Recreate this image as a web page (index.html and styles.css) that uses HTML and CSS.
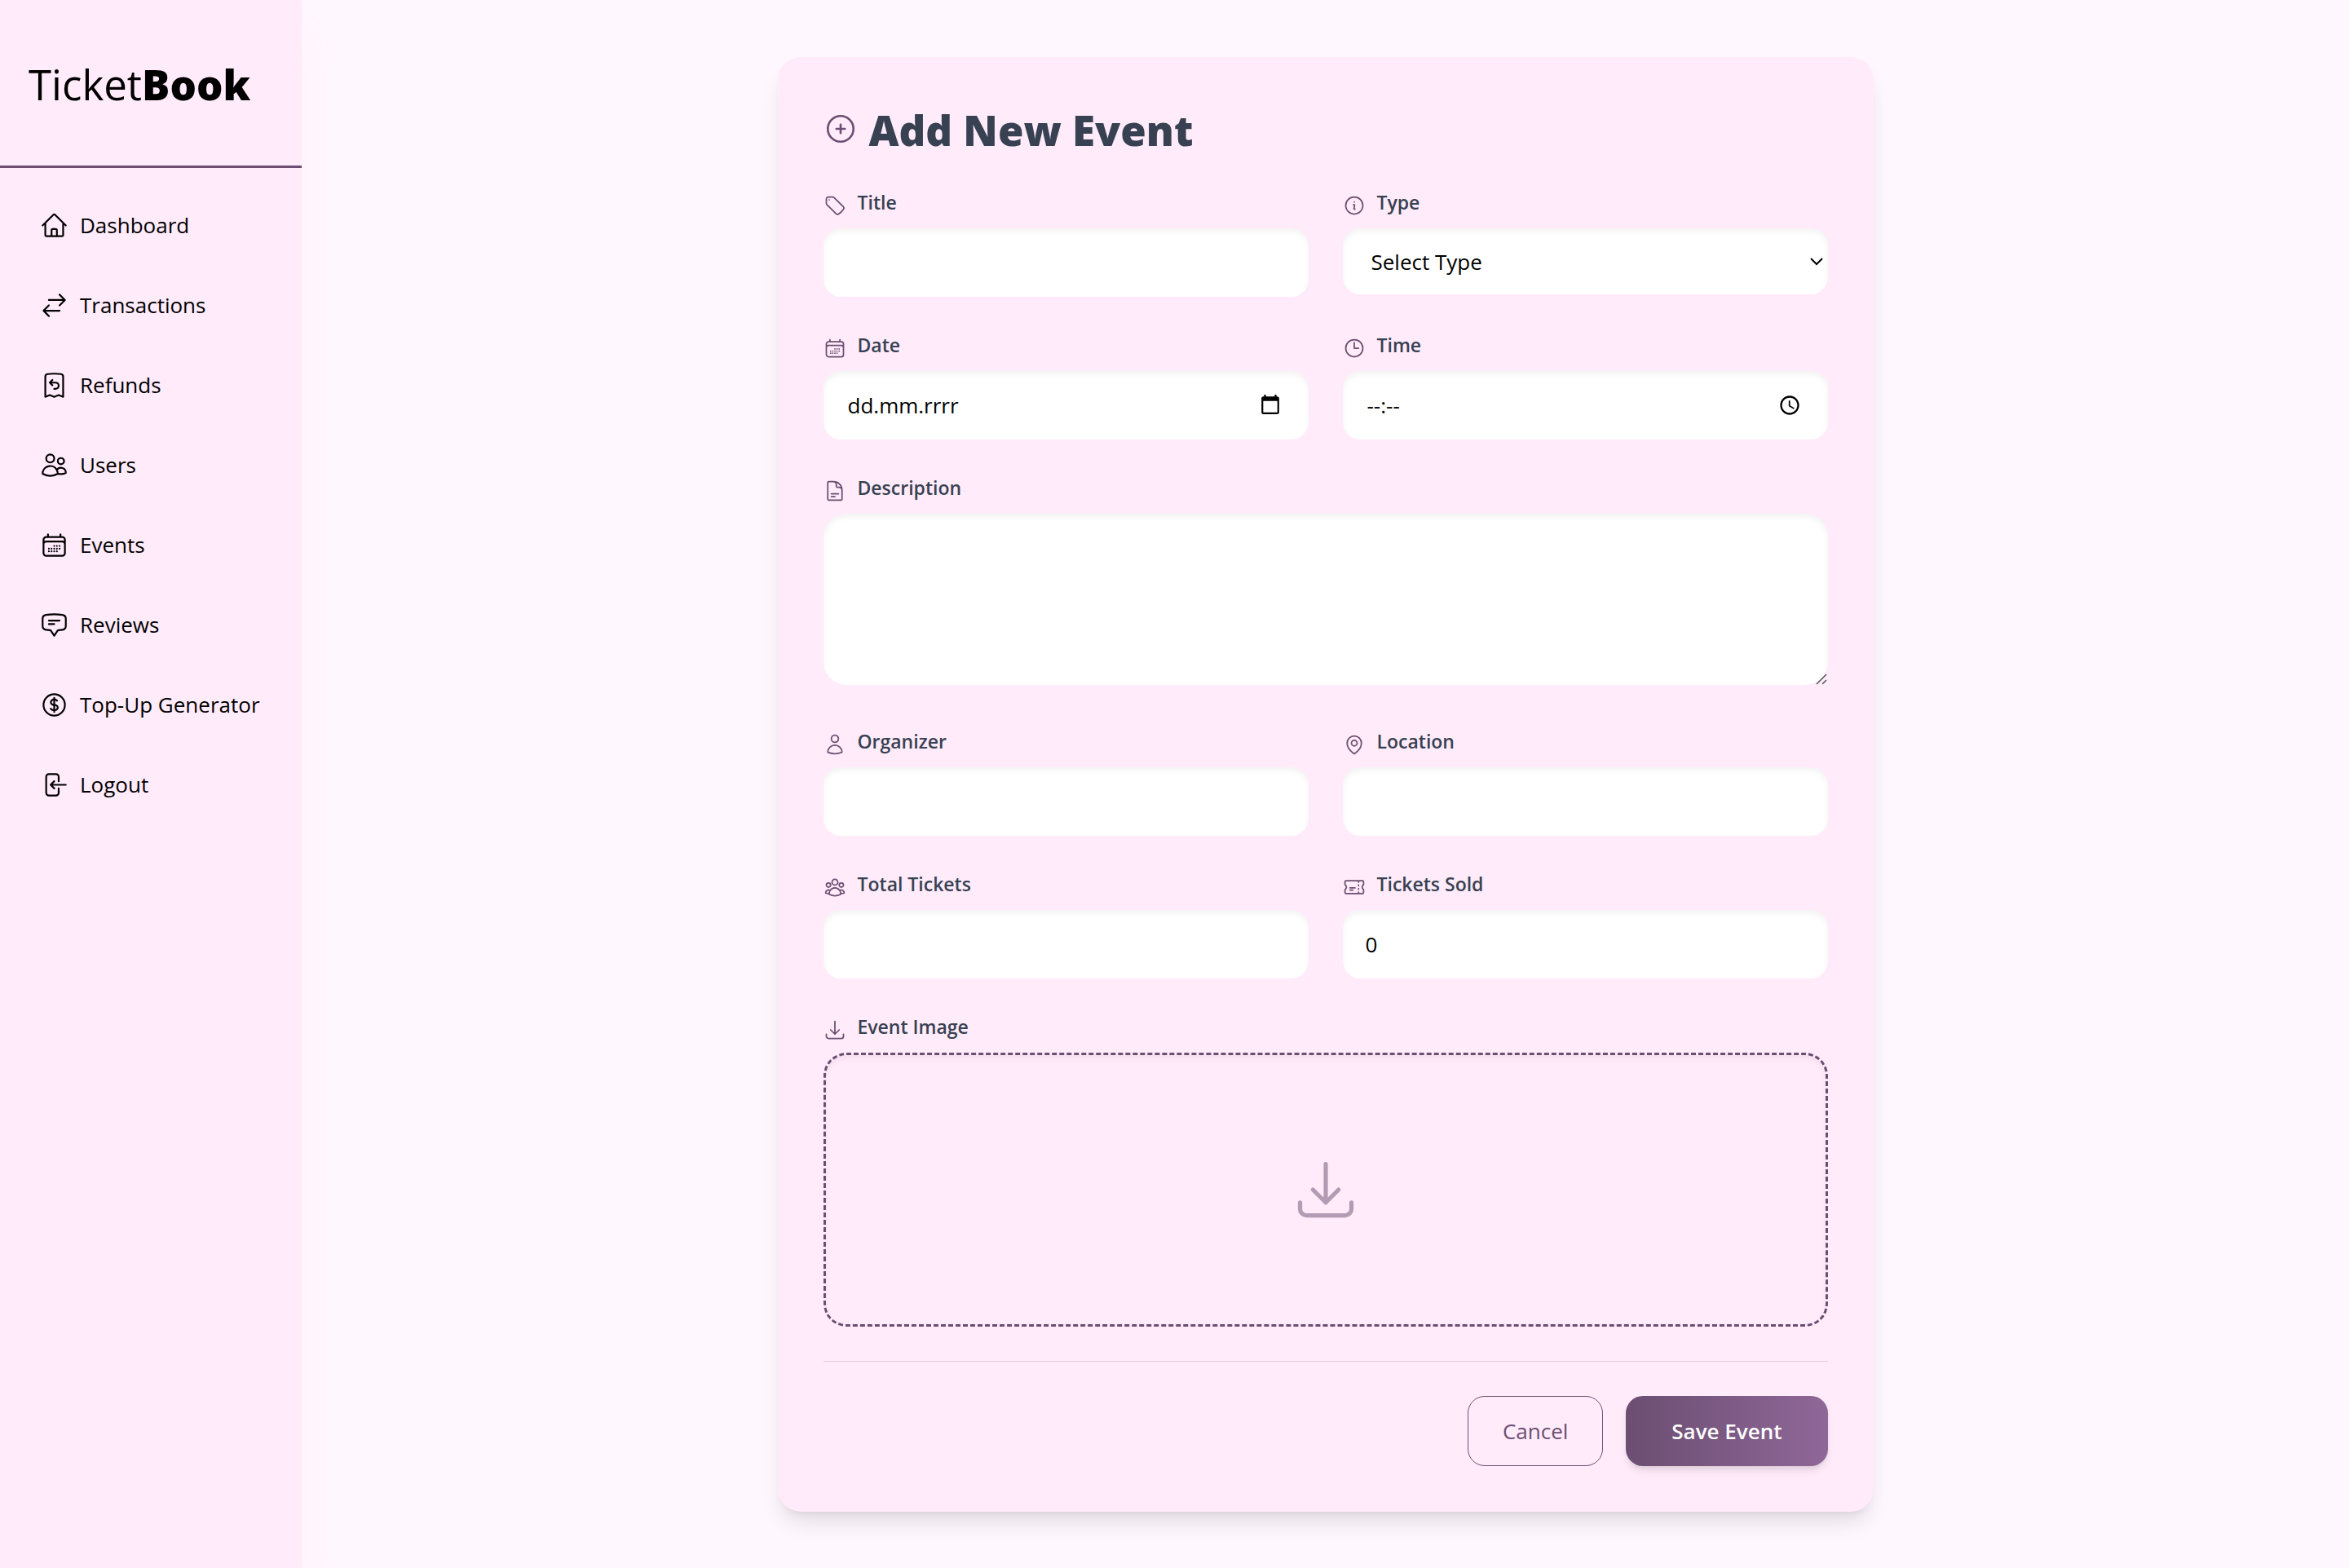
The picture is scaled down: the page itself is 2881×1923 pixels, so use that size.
FILE: index.html
```html
<!DOCTYPE html>
<html lang="en">
<head>
<meta charset="utf-8">
<meta name="viewport" content="width=device-width, initial-scale=1">
<title>TicketBook</title>
<link rel="stylesheet" href="styles.css">
</head>
<body>
<div class="app">
  <aside class="sidebar">
    <div class="logo"><span class="logo-light">Ticket</span><span class="logo-heavy">Book</span></div>
    <nav class="nav">
      <a class="nav-link" href="#dashboard"><svg class="icon icon-nav" viewBox="0 0 24 24"><path d="m2.25 12 8.954-8.955c.44-.439 1.152-.439 1.591 0L21.75 12M4.5 9.75v10.125c0 .621.504 1.125 1.125 1.125H9.75v-4.875c0-.621.504-1.125 1.125-1.125h2.25c.621 0 1.125.504 1.125 1.125V21h4.125c.621 0 1.125-.504 1.125-1.125V9.75M8.25 21h8.25"/></svg>Dashboard</a>
      <a class="nav-link" href="#transactions"><svg class="icon icon-nav" viewBox="0 0 24 24"><path d="M7.5 21 3 16.5m0 0L7.5 12M3 16.5h13.5m0-13.5L21 7.5m0 0L16.5 12M21 7.5H7.5"/></svg>Transactions</a>
      <a class="nav-link" href="#refunds"><svg class="icon icon-nav" viewBox="0 0 24 24"><path d="M8.25 9.75h4.875a2.625 2.625 0 0 1 0 5.25H12M8.25 9.75 10.5 7.5M8.25 9.75 10.5 12m9-7.243V21.75l-3.75-1.5-3.75 1.5-3.75-1.5-3.75 1.5V4.757c0-1.108.806-2.057 1.907-2.185a48.507 48.507 0 0 1 11.186 0c1.1.128 1.907 1.077 1.907 2.185Z"/></svg>Refunds</a>
      <a class="nav-link" href="#users"><svg class="icon icon-nav" viewBox="0 0 24 24"><path d="M15 19.128a9.38 9.38 0 0 0 2.625.372 9.337 9.337 0 0 0 4.121-.952 4.125 4.125 0 0 0-7.533-2.493M15 19.128v-.003c0-1.113-.285-2.16-.786-3.07M15 19.128v.106A12.318 12.318 0 0 1 8.624 21c-2.331 0-4.512-.645-6.374-1.766l-.001-.109a6.375 6.375 0 0 1 11.964-3.07M12 6.375a3.375 3.375 0 1 1-6.75 0 3.375 3.375 0 0 1 6.75 0Zm8.25 2.25a2.625 2.625 0 1 1-5.25 0 2.625 2.625 0 0 1 5.25 0Z"/></svg>Users</a>
      <a class="nav-link" href="#events"><svg class="icon icon-nav" viewBox="0 0 24 24"><path d="M6.75 3v2.25M17.25 3v2.25M3 18.75V7.5a2.25 2.25 0 0 1 2.25-2.25h13.5A2.25 2.25 0 0 1 21 7.5v11.25m-18 0A2.25 2.25 0 0 0 5.25 21h13.5A2.25 2.25 0 0 0 21 18.75m-18 0v-7.5A2.25 2.25 0 0 1 5.25 9h13.5A2.25 2.25 0 0 1 21 11.25v7.5m-9-6h.008v.008H12v-.008ZM12 15h.008v.008H12V15Zm0 2.25h.008v.008H12v-.008ZM9.75 15h.008v.008H9.75V15Zm0 2.25h.008v.008H9.75v-.008ZM7.5 15h.008v.008H7.5V15Zm0 2.25h.008v.008H7.5v-.008Zm6.75-4.5h.008v.008h-.008v-.008Zm0 2.25h.008v.008h-.008V15Zm0 2.25h.008v.008h-.008v-.008Zm2.25-4.5h.008v.008H16.5v-.008Zm0 2.25h.008v.008H16.5V15Z"/></svg>Events</a>
      <a class="nav-link" href="#reviews"><svg class="icon icon-nav" viewBox="0 0 24 24"><path d="M7.5 8.25h9m-9 3H12m-9.75 1.51c0 1.6 1.123 2.994 2.707 3.227 1.129.166 2.27.293 3.423.379.35.026.67.21.865.501L12 21l2.755-4.133a1.14 1.14 0 0 1 .865-.501 48.172 48.172 0 0 0 3.423-.379c1.584-.233 2.707-1.626 2.707-3.228V6.741c0-1.602-1.123-2.995-2.707-3.228A48.394 48.394 0 0 0 12 3c-2.392 0-4.744.175-7.043.513C3.373 3.746 2.25 5.14 2.25 6.741v6.018Z"/></svg>Reviews</a>
      <a class="nav-link" href="#top-up"><svg class="icon icon-nav" viewBox="0 0 24 24"><path d="M12 6v12m-3-2.818.879.659c1.171.879 3.07.879 4.242 0 1.172-.879 1.172-2.303 0-3.182C13.536 12.219 12.768 12 12 12c-.725 0-1.45-.22-2.003-.659-1.106-.879-1.106-2.303 0-3.182s2.9-.879 4.006 0l.415.33M21 12a9 9 0 1 1-18 0 9 9 0 0 1 18 0Z"/></svg>Top-Up Generator</a>
      <a class="nav-link" href="#logout"><svg class="icon icon-nav" viewBox="0 0 24 24"><path d="M15.75 9V5.25A2.25 2.25 0 0 0 13.5 3h-6a2.25 2.25 0 0 0-2.25 2.25v13.5A2.25 2.25 0 0 0 7.5 21h6a2.25 2.25 0 0 0 2.25-2.25V15M12 9l-3 3m0 0 3 3m-3-3h12.75"/></svg>Logout</a>
    </nav>
  </aside>

  <main class="main">
    <form class="card">
      <h1 class="card-title"><svg class="icon icon-title" viewBox="0 0 24 24"><path d="M12 9v6m3-3H9m12 0a9 9 0 1 1-18 0 9 9 0 0 1 18 0Z"/></svg>Add New Event</h1>

      <div class="fields">
        <div class="field">
          <label class="label" for="title"><svg class="icon icon-label" viewBox="0 0 24 24"><path d="M9.568 3H5.25A2.25 2.25 0 0 0 3 5.25v4.318c0 .597.237 1.17.659 1.591l9.581 9.581c.699.699 1.78.872 2.607.33a18.095 18.095 0 0 0 5.223-5.223c.542-.827.369-1.908-.33-2.607L11.16 3.66A2.25 2.25 0 0 0 9.568 3Z"/><path d="M6 6h.008v.008H6V6Z"/></svg>Title</label>
          <input class="control" id="title" type="text">
        </div>
        <div class="field">
          <label class="label" for="type"><svg class="icon icon-label" viewBox="0 0 24 24"><path d="m11.25 11.25.041-.02a.75.75 0 0 1 1.063.852l-.708 2.836a.75.75 0 0 0 1.063.853l.041-.021M21 12a9 9 0 1 1-18 0 9 9 0 0 1 18 0Zm-9-3.75h.008v.008H12V8.25Z"/></svg>Type</label>
          <div class="select">
            <select class="control" id="type"><option>Select Type</option></select>
            <svg class="chevron" viewBox="0 0 16 10"><path d="M1 1l7 7 7-7"/></svg>
          </div>
        </div>
        <div class="field">
          <label class="label" for="date"><svg class="icon icon-label" viewBox="0 0 24 24"><path d="M6.75 3v2.25M17.25 3v2.25M3 18.75V7.5a2.25 2.25 0 0 1 2.25-2.25h13.5A2.25 2.25 0 0 1 21 7.5v11.25m-18 0A2.25 2.25 0 0 0 5.25 21h13.5A2.25 2.25 0 0 0 21 18.75m-18 0v-7.5A2.25 2.25 0 0 1 5.25 9h13.5A2.25 2.25 0 0 1 21 11.25v7.5m-9-6h.008v.008H12v-.008ZM12 15h.008v.008H12V15Zm0 2.25h.008v.008H12v-.008ZM9.75 15h.008v.008H9.75V15Zm0 2.25h.008v.008H9.75v-.008ZM7.5 15h.008v.008H7.5V15Zm0 2.25h.008v.008H7.5v-.008Zm6.75-4.5h.008v.008h-.008v-.008Zm0 2.25h.008v.008h-.008V15Zm0 2.25h.008v.008h-.008v-.008Zm2.25-4.5h.008v.008H16.5v-.008Zm0 2.25h.008v.008H16.5V15Z"/></svg>Date</label>
          <input class="control picker" id="date" type="date" placeholder="dd.mm.rrrr">
        </div>
        <div class="field">
          <label class="label" for="time"><svg class="icon icon-label" viewBox="0 0 24 24"><path d="M12 6v6h4.5m4.5 0a9 9 0 1 1-18 0 9 9 0 0 1 18 0Z"/></svg>Time</label>
          <input class="control picker" id="time" type="time" placeholder="--:--">
        </div>
        <div class="field field-wide field-description">
          <label class="label" for="description"><svg class="icon icon-label" viewBox="0 0 24 24"><path d="M19.5 14.25v-2.625a3.375 3.375 0 0 0-3.375-3.375h-1.5A1.125 1.125 0 0 1 13.5 7.125v-1.5a3.375 3.375 0 0 0-3.375-3.375H8.25m0 12.75h7.5m-7.5 3H12M10.5 2.25H5.625c-.621 0-1.125.504-1.125 1.125v17.25c0 .621.504 1.125 1.125 1.125h12.75c.621 0 1.125-.504 1.125-1.125V11.25a9 9 0 0 0-9-9Z"/></svg>Description</label>
          <textarea class="control control-area" id="description"></textarea>
        </div>
        <div class="field">
          <label class="label" for="organizer"><svg class="icon icon-label" viewBox="0 0 24 24"><path d="M15.75 6a3.75 3.75 0 1 1-7.5 0 3.75 3.75 0 0 1 7.5 0ZM4.501 20.118a7.5 7.5 0 0 1 14.998 0A17.933 17.933 0 0 1 12 21.75c-2.676 0-5.216-.584-7.499-1.632Z"/></svg>Organizer</label>
          <input class="control" id="organizer" type="text">
        </div>
        <div class="field">
          <label class="label" for="location"><svg class="icon icon-label" viewBox="0 0 24 24"><path d="M15 10.5a3 3 0 1 1-6 0 3 3 0 0 1 6 0Z"/><path d="M19.5 10.5c0 7.142-7.5 11.25-7.5 11.25S4.5 17.642 4.5 10.5a7.5 7.5 0 1 1 15 0Z"/></svg>Location</label>
          <input class="control" id="location" type="text">
        </div>
        <div class="field">
          <label class="label" for="total"><svg class="icon icon-label" viewBox="0 0 24 24"><path d="M18 18.72a9.094 9.094 0 0 0 3.741-.479 3 3 0 0 0-4.682-2.72m.94 3.198.001.031c0 .225-.012.447-.037.666A11.944 11.944 0 0 1 12 21c-2.17 0-4.207-.576-5.963-1.584A6.062 6.062 0 0 1 6 18.719m12 0a5.971 5.971 0 0 0-.941-3.197m0 0A5.995 5.995 0 0 0 12 12.75a5.995 5.995 0 0 0-5.058 2.772m0 0a3 3 0 0 0-4.681 2.72 8.986 8.986 0 0 0 3.74.477m.94-3.197a5.971 5.971 0 0 0-.94 3.197M15 6.75a3 3 0 1 1-6 0 3 3 0 0 1 6 0Zm6 3a2.25 2.25 0 1 1-4.5 0 2.25 2.25 0 0 1 4.5 0Zm-13.5 0a2.25 2.25 0 1 1-4.5 0 2.25 2.25 0 0 1 4.5 0Z"/></svg>Total Tickets</label>
          <input class="control" id="total" type="number">
        </div>
        <div class="field">
          <label class="label" for="sold"><svg class="icon icon-label" viewBox="0 0 24 24"><path d="M16.5 6v.75m0 3v.75m0 3v.75m0 3V18m-9-5.25h5.25M7.5 15h3M3.375 5.25c-.621 0-1.125.504-1.125 1.125v3.026a2.999 2.999 0 0 1 0 5.198v3.026c0 .621.504 1.125 1.125 1.125h17.25c.621 0 1.125-.504 1.125-1.125v-3.026a2.999 2.999 0 0 1 0-5.198V6.375c0-.621-.504-1.125-1.125-1.125H3.375Z"/></svg>Tickets Sold</label>
          <input class="control" id="sold" type="number" value="0">
        </div>
        <div class="field field-wide">
          <label class="label" for="image"><svg class="icon icon-label" viewBox="0 0 24 24"><path d="M3 16.5v2.25A2.25 2.25 0 0 0 5.25 21h13.5A2.25 2.25 0 0 0 21 18.75V16.5M16.5 12 12 16.5m0 0L7.5 12m4.5 4.5V3"/></svg>Event Image</label>
          <label class="dropzone" for="image">
            <svg class="icon icon-drop" viewBox="0 0 24 24"><path d="M3 16.5v2.25A2.25 2.25 0 0 0 5.25 21h13.5A2.25 2.25 0 0 0 21 18.75V16.5M16.5 12 12 16.5m0 0L7.5 12m4.5 4.5V3"/></svg>
            <input id="image" type="file" accept="image/*" hidden>
          </label>
        </div>
      </div>

      <div class="actions">
        <button class="button button-outline" type="button">Cancel</button>
        <button class="button button-primary" type="submit">Save Event</button>
      </div>
    </form>
  </main>
</div>
</body>
</html>
```

FILE: styles.css
```css
:root {
  --plum: #6b4e71;
  --plum-light: #8f6798;
  --blush: #ffebfa;
  --page: #fff7fe;
  --slate: #374151;
}

*,
*::before,
*::after {
  box-sizing: border-box;
}

body {
  margin: 0;
  background: var(--page);
  color: #000;
  font-family: "Open Sans", "Noto Sans", sans-serif;
  font-size: 26px;
  line-height: 42px;
}

.app {
  display: flex;
  min-height: 100vh;
}

.icon {
  flex: none;
  fill: none;
  stroke: currentColor;
  stroke-width: 1.5;
  stroke-linecap: round;
  stroke-linejoin: round;
}

/* Sidebar */

.sidebar {
  flex: 0 0 370px;
  background: var(--blush);
  box-shadow: 0 35px 44px -9px rgba(255, 235, 240, 0.6);
}

.logo {
  padding: 72px 35px 68px;
  border-bottom: 3px solid var(--plum);
  font-size: 51px;
  line-height: 63px;
}

.logo-light {
  font-weight: 400;
}

.logo-heavy {
  font-weight: 800;
}

.nav {
  display: flex;
  flex-direction: column;
  gap: 28px;
  padding: 35px 14px;
}

.nav-link {
  display: flex;
  align-items: center;
  gap: 14px;
  padding: 14px 0 14px 35px;
  color: inherit;
  text-decoration: none;
  white-space: nowrap;
}

.icon-nav {
  width: 35px;
  height: 35px;
}

/* Form card */

.main {
  flex: 1;
  padding: 70px 35px;
}

.card {
  max-width: 1344px;
  margin: 0 auto;
  padding: 56px;
  border-radius: 28px;
  background: var(--blush);
  box-shadow: 0 18px 26px -5px rgba(0, 0, 0, 0.1), 0 7px 11px -7px rgba(0, 0, 0, 0.1);
}

.card-title {
  display: flex;
  align-items: flex-start;
  gap: 14px;
  margin: 0 0 38px;
  color: var(--slate);
  font-size: 51px;
  font-weight: 800;
  line-height: 67px;
}

.icon-title {
  width: 42px;
  height: 42px;
  margin-top: 11px;
  color: var(--plum);
}

.fields {
  display: grid;
  grid-template-columns: 1fr 1fr;
  gap: 42px;
}

.field {
  min-width: 0;
}

.field-wide {
  grid-column: 1 / -1;
}

.field-description {
  padding-bottom: 10px;
}

.label {
  display: flex;
  align-items: flex-end;
  gap: 14px;
  margin-bottom: 14px;
  color: var(--slate);
  font-size: 23px;
  font-weight: 600;
  line-height: 35px;
}

.icon-label {
  width: 28px;
  height: 28px;
  color: var(--plum);
}

.control {
  display: block;
  width: 100%;
  height: 84px;
  margin: 0;
  padding: 0 28px;
  border: 0;
  border-radius: 21px;
  background: #fff;
  box-shadow: inset 0 4px 7px rgba(0, 0, 0, 0.05);
  color: #000;
  font: inherit;
  appearance: none;
}

.control-area {
  height: 210px;
  padding: 21px 28px;
  border-radius: 28px;
  resize: vertical;
}

.control-area::-webkit-resizer {
  background: url("data:image/svg+xml,%3Csvg xmlns='http://www.w3.org/2000/svg' viewBox='0 0 15 15'%3E%3Cpath d='M1 14 13 2M8 14l5-5' fill='none' stroke='%23555' stroke-width='1.5'/%3E%3C/svg%3E") no-repeat center / contain;
}

.control[type="number"] {
  appearance: textfield;
}

.select {
  display: grid;
  align-items: center;
}

.select > * {
  grid-area: 1 / 1;
}

.select .control {
  height: 81px;
  padding: 0 35px;
}

.chevron {
  justify-self: end;
  width: 16px;
  height: 10px;
  margin-right: 6px;
  fill: none;
  stroke: #000;
  stroke-width: 2;
  pointer-events: none;
}

.picker {
  display: flex;
  align-items: center;
  padding: 0 33px 0 30px;
}

.picker::before {
  content: attr(placeholder);
  flex: 1;
}

.picker::-webkit-datetime-edit {
  display: none;
}

.picker::-webkit-calendar-picker-indicator {
  width: 28px;
  height: 28px;
  margin: 0;
  padding: 0;
  background-size: contain;
}

.dropzone {
  display: flex;
  align-items: center;
  justify-content: center;
  height: 336px;
  border: 3px dashed var(--plum);
  border-radius: 28px;
  box-shadow: inset 0 4px 7px rgba(0, 0, 0, 0.05);
  cursor: pointer;
}

.icon-drop {
  width: 84px;
  height: 84px;
  color: var(--plum);
  opacity: 0.5;
}

.actions {
  display: flex;
  justify-content: flex-end;
  gap: 28px;
  margin-top: 42px;
  padding-top: 42px;
  border-top: 1px solid #e3cbe0;
}

.button {
  height: 86px;
  padding: 0 42px;
  border: 1px solid var(--plum);
  border-radius: 21px;
  background: none;
  color: var(--plum);
  font: inherit;
  cursor: pointer;
}

.button-primary {
  padding: 0 56px;
  border: 0;
  background: linear-gradient(90deg, var(--plum), var(--plum-light));
  box-shadow: 0 7px 11px -2px rgba(0, 0, 0, 0.1), 0 4px 7px -4px rgba(0, 0, 0, 0.1);
  color: #fff;
  font-weight: 600;
}
```
